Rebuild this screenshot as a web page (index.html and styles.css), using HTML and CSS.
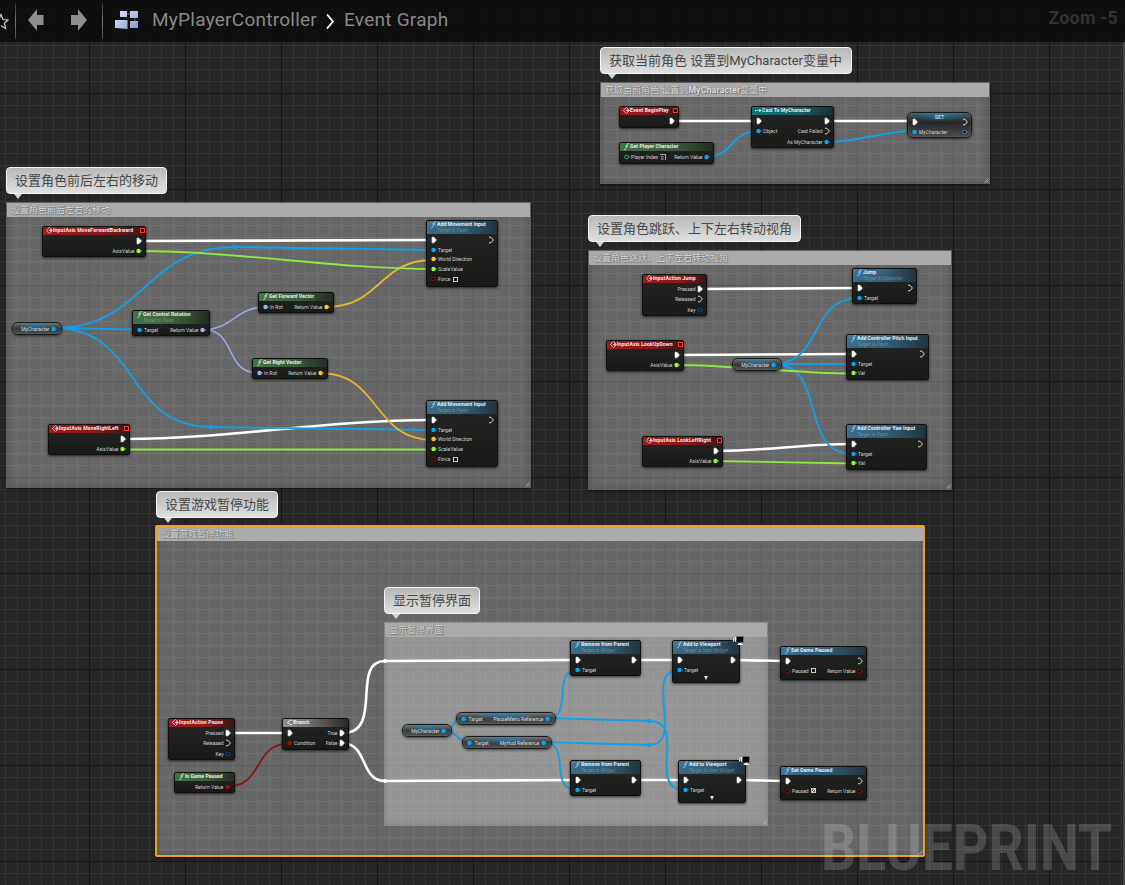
FILE: index.html
```html
<!DOCTYPE html>
<html lang="en">
<head>
<meta charset="utf-8">
<title>MyPlayerController - Event Graph</title>
<link rel="stylesheet" href="styles.css">
</head>
<body>
<svg class="defs" width="0" height="0">
  <symbol id="exec" viewBox="0 0 6 8"><path d="M1 1.2h2L5.4 4 3 6.8H1z" fill="#fff" stroke="#fff" stroke-width=".6"/></symbol>
  <symbol id="exec-open" viewBox="0 0 6 8"><path d="M1 1.2h1.9L5.4 4 2.9 6.8H1" fill="none" stroke="#eee" stroke-width=".9"/></symbol>
  <symbol id="pin" viewBox="0 0 6 8"><circle cx="2.5" cy="4" r="2.2" fill="currentColor"/><path d="M4.6 2.9 6 4 4.6 5.1z" fill="currentColor"/></symbol>
  <symbol id="pin-open" viewBox="0 0 6 8"><circle cx="2.5" cy="4" r="1.8" fill="#0c0c0c" stroke="currentColor" stroke-width=".9"/><path d="M4.7 3 6 4 4.7 5z" fill="currentColor"/></symbol>
  <symbol id="event" viewBox="0 0 6 6"><path d="M2.7.5.4 3l2.3 2.5M3.2.5 5.6 3 3.2 5.5M2.4 3h2.4M3.7 2 4.8 3 3.7 4" fill="none" stroke="#f3dede" stroke-width=".7"/></symbol>
  <symbol id="func" viewBox="0 0 6 6"><path d="M5.2.7C3.9.1 3.5 1 3.2 2.2L2.6 4.4C2.3 5.5 1.7 5.9.9 5.5M2 2.5h2.5" fill="none" stroke="currentColor" stroke-width=".85"/></symbol>
  <symbol id="cast" viewBox="0 0 6 6"><path d="M0 3h1.2M2 3h1M4 2.2 5.2 3 4 3.8z" fill="#dff" stroke="#dff" stroke-width=".8"/></symbol>
  <symbol id="branch" viewBox="0 0 6 6"><path d="M5.3 1.1H3.6L1.2 3l2.4 1.9h1.7" fill="none" stroke="#eee" stroke-width=".8"/></symbol>
  <symbol id="monitor" viewBox="0 0 11 9"><path d="M3.5.5h7v6h-7z" fill="#050505" stroke="#777" stroke-width=".5"/><path d="M5.5 7h3v1H10v1H4.5V8h1z" fill="#fff"/><path d="M0 5.5V3L1.3 1H3v5H2V4.5H1v1z" fill="#f5f5f5"/><path d="M1.4 2v1.6" stroke="#222" stroke-width=".7"/></symbol>
  <symbol id="grip" viewBox="0 0 6 6"><path d="M.5 5.5l5-5M3 5.5 5.5 3" stroke="#ccc" stroke-width=".8"/></symbol>
  <linearGradient id="tile" x1="0" y1="0" x2="1" y2="1"><stop offset="0" stop-color="#e7edff"/><stop offset="1" stop-color="#8294cf"/></linearGradient>
</svg>
<main class="graph">
  <section class="comment c-begin"><h2>获取当前角色 设置到<b>MyCharacter</b>变量中</h2><svg class="grip"><use href="#grip"/></svg></section>
  <section class="comment c-move"><h2>设置角色前后左右的移动</h2><svg class="grip"><use href="#grip"/></svg></section>
  <section class="comment c-look"><h2>设置角色跳跃、上下左右转动视角</h2><svg class="grip"><use href="#grip"/></svg></section>
  <section class="comment c-pause selected"><h2>设置游戏暂停功能</h2><svg class="grip"><use href="#grip"/></svg></section>
  <section class="comment c-ui"><h2>显示暂停界面</h2><svg class="grip"><use href="#grip"/></svg></section>

  <div class="bubble b-begin">获取当前角色 设置到MyCharacter变量中</div>
  <div class="bubble b-move">设置角色前后左右的移动</div>
  <div class="bubble b-look">设置角色跳跃、上下左右转动视角</div>
  <div class="bubble b-pause">设置游戏暂停功能</div>
  <div class="bubble b-ui">显示暂停界面</div>

  <svg class="wires" viewBox="0 0 1125 885">
    <g class="w-exec">
      <path d="M674 121H755M829 121H912"/>
      <path d="M141 241L431 240"/>
      <path d="M125 439C230 439 325 420 431 420"/>
      <path d="M701 289L857 288M678 355L851 354"/>
      <path d="M717 451C765 451 803 444 851 444"/>
      <path d="M229 733H287M343 733C384 733 350 661 385 661L575 660"/>
      <path d="M343 743.5C368 743.5 360 781 385 781L575 780"/>
      <path d="M635 660H677M734 660L785 661M635 780H683M740 780L785 781"/>
    </g>
    <g class="w-object">
      <path d="M706 157C734 157 729 131.5 757 131.5M827 142C856 142 885 131 914 131"/>
      <path d="M54 328C146 328 143 247 235 247L433 250M54 328L138 329.5"/>
      <path d="M54 328C141 328 124 427 211 427L433 430"/>
      <path d="M773 364C824 364 808 298 859 298M773 364H853M773 364C829 364 797 454 853 454"/>
      <path d="M444 730C455 730 452 718 463 718M444 730C456 730 457 742 469 742"/>
      <path d="M548 718C574 718 551 670 577 670M548 718L649 721M543 742L649 745"/>
      <path d="M543 742C573 742 547 790 577 790"/>
      <path d="M649 721C689 721 645 790 685 790M649 745C686 745 642 670 679 670"/>
    </g>
    <g class="w-rotator"><path d="M203 329.5C233 329.5 236 307 265 307M203 329.5C237 329.5 224 373 258 373"/></g>
    <g class="w-vector"><path d="M326 307C381 307 378 260 433 260M320 373C381 373 372 440 433 440"/></g>
    <g class="w-float"><path d="M138 251C236 251 335 269 433 269M123 449.5H433M675 365C734 365 794 373.5 853 373.5M715 461L853 463.5"/></g>
    <g class="w-bool"><path d="M227 786.5C264 786.5 253 743.5 289 743.5"/></g>
    <g class="k-object"><circle cx="235" cy="247" r="2.2"/><circle cx="211" cy="427" r="2.2"/><circle cx="649" cy="721" r="2.2"/><circle cx="649" cy="745" r="2.2"/></g>
    <g class="k-exec"><circle cx="385" cy="661" r="2.1"/><circle cx="385" cy="781" r="2.1"/></g>
  </svg>

  <article class="node event n-begin"><header><svg><use href="#event"/></svg><h3>Event BeginPlay</h3><i></i></header>
    <ul><li><span></span><span><svg><use href="#exec"/></svg></span></li></ul></article>
  <article class="node pure n-getplayer"><header><svg><use href="#func"/></svg><h3>Get Player Character</h3></header>
    <ul><li><span class="t-int"><svg><use href="#pin-open"/></svg>Player Index <em class="num">0</em></span><span class="t-object">Return Value<svg><use href="#pin"/></svg></span></li></ul></article>
  <article class="node cast n-cast"><header><svg><use href="#cast"/></svg><h3>Cast To MyCharacter</h3></header>
    <ul><li><span><svg><use href="#exec"/></svg></span><span><svg><use href="#exec"/></svg></span></li>
    <li><span class="t-object"><svg><use href="#pin"/></svg>Object</span><span>Cast Failed<svg><use href="#exec-open"/></svg></span></li>
    <li><span></span><span class="t-object">As MyCharacter<svg><use href="#pin"/></svg></span></li></ul></article>
  <article class="node set n-set"><header><h3>SET</h3></header>
    <ul><li><span><svg><use href="#exec"/></svg></span><span><svg><use href="#exec-open"/></svg></span></li>
    <li><span class="t-object"><svg><use href="#pin"/></svg>MyCharacter</span><span class="t-object"><svg><use href="#pin-open"/></svg></span></li></ul></article>

  <article class="node event n-fwd"><header><svg><use href="#event"/></svg><h3>InputAxis MoveForwardBackward</h3><i></i></header>
    <ul><li><span></span><span><svg><use href="#exec"/></svg></span></li><li><span></span><span class="t-float">Axis Value<svg><use href="#pin"/></svg></span></li></ul></article>
  <article class="node event n-right"><header><svg><use href="#event"/></svg><h3>InputAxis MoveRightLeft</h3><i></i></header>
    <ul><li><span></span><span><svg><use href="#exec"/></svg></span></li><li><span></span><span class="t-float">Axis Value<svg><use href="#pin"/></svg></span></li></ul></article>
  <article class="node func n-add1"><header><svg><use href="#func"/></svg><h3>Add Movement Input</h3><p>Target is Pawn</p></header>
    <ul><li><span><svg><use href="#exec"/></svg></span><span><svg><use href="#exec-open"/></svg></span></li>
    <li><span class="t-object"><svg><use href="#pin"/></svg>Target</span></li><li><span class="t-vector"><svg><use href="#pin"/></svg>World Direction</span></li>
    <li><span class="t-float"><svg><use href="#pin"/></svg>Scale Value</span></li><li><span class="t-bool"><svg><use href="#pin-open"/></svg>Force <em class="box"></em></span></li></ul></article>
  <article class="node func n-add2"><header><svg><use href="#func"/></svg><h3>Add Movement Input</h3><p>Target is Pawn</p></header>
    <ul><li><span><svg><use href="#exec"/></svg></span><span><svg><use href="#exec-open"/></svg></span></li>
    <li><span class="t-object"><svg><use href="#pin"/></svg>Target</span></li><li><span class="t-vector"><svg><use href="#pin"/></svg>World Direction</span></li>
    <li><span class="t-float"><svg><use href="#pin"/></svg>Scale Value</span></li><li><span class="t-bool"><svg><use href="#pin-open"/></svg>Force <em class="box"></em></span></li></ul></article>
  <article class="node pure n-rot"><header><svg><use href="#func"/></svg><h3>Get Control Rotation</h3><p>Target is Pawn</p></header>
    <ul><li><span class="t-object"><svg><use href="#pin"/></svg>Target</span><span class="t-rotator">Return Value<svg><use href="#pin"/></svg></span></li></ul></article>
  <article class="node pure n-fvec"><header><svg><use href="#func"/></svg><h3>Get Forward Vector</h3></header>
    <ul><li><span class="t-rotator"><svg><use href="#pin"/></svg>In Rot</span><span class="t-vector">Return Value<svg><use href="#pin"/></svg></span></li></ul></article>
  <article class="node pure n-rvec"><header><svg><use href="#func"/></svg><h3>Get Right Vector</h3></header>
    <ul><li><span class="t-rotator"><svg><use href="#pin"/></svg>In Rot</span><span class="t-vector">Return Value<svg><use href="#pin"/></svg></span></li></ul></article>
  <div class="var v-char1"><span class="t-object">MyCharacter<svg><use href="#pin"/></svg></span></div>

  <article class="node event n-jumpkey"><header><svg><use href="#event"/></svg><h3>InputAction Jump</h3></header>
    <ul><li><span></span><span>Pressed<svg><use href="#exec"/></svg></span></li><li><span></span><span>Released<svg><use href="#exec-open"/></svg></span></li><li><span></span><span class="t-key">Key<svg><use href="#pin-open"/></svg></span></li></ul></article>
  <article class="node func n-jump"><header><svg><use href="#func"/></svg><h3>Jump</h3><p>Target is Character</p></header>
    <ul><li><span><svg><use href="#exec"/></svg></span><span><svg><use href="#exec-open"/></svg></span></li><li><span class="t-object"><svg><use href="#pin"/></svg>Target</span></li></ul></article>
  <article class="node event n-lookud"><header><svg><use href="#event"/></svg><h3>InputAxis LookUpDown</h3><i></i></header>
    <ul><li><span></span><span><svg><use href="#exec"/></svg></span></li><li><span></span><span class="t-float">Axis Value<svg><use href="#pin"/></svg></span></li></ul></article>
  <article class="node func n-pitch"><header><svg><use href="#func"/></svg><h3>Add Controller Pitch Input</h3><p>Target is Pawn</p></header>
    <ul><li><span><svg><use href="#exec"/></svg></span><span><svg><use href="#exec-open"/></svg></span></li><li><span class="t-object"><svg><use href="#pin"/></svg>Target</span></li><li><span class="t-float"><svg><use href="#pin"/></svg>Val</span></li></ul></article>
  <article class="node event n-looklr"><header><svg><use href="#event"/></svg><h3>InputAxis LookLeftRight</h3><i></i></header>
    <ul><li><span></span><span><svg><use href="#exec"/></svg></span></li><li><span></span><span class="t-float">Axis Value<svg><use href="#pin"/></svg></span></li></ul></article>
  <article class="node func n-yaw"><header><svg><use href="#func"/></svg><h3>Add Controller Yaw Input</h3><p>Target is Pawn</p></header>
    <ul><li><span><svg><use href="#exec"/></svg></span><span><svg><use href="#exec-open"/></svg></span></li><li><span class="t-object"><svg><use href="#pin"/></svg>Target</span></li><li><span class="t-float"><svg><use href="#pin"/></svg>Val</span></li></ul></article>
  <div class="var v-char2"><span class="t-object">MyCharacter<svg><use href="#pin"/></svg></span></div>

  <article class="node event n-pausekey"><header><svg><use href="#event"/></svg><h3>InputAction Pause</h3></header>
    <ul><li><span></span><span>Pressed<svg><use href="#exec"/></svg></span></li><li><span></span><span>Released<svg><use href="#exec-open"/></svg></span></li><li><span></span><span class="t-key">Key<svg><use href="#pin-open"/></svg></span></li></ul></article>
  <article class="node flow n-branch"><header><svg><use href="#branch"/></svg><h3>Branch</h3></header>
    <ul><li><span><svg><use href="#exec"/></svg></span><span>True<svg><use href="#exec"/></svg></span></li><li><span class="t-bool"><svg><use href="#pin"/></svg>Condition</span><span>False<svg><use href="#exec"/></svg></span></li></ul></article>
  <article class="node pure n-ispaused"><header><svg><use href="#func"/></svg><h3>Is Game Paused</h3></header>
    <ul><li><span></span><span class="t-bool">Return Value<svg><use href="#pin"/></svg></span></li></ul></article>
  <div class="var v-char3"><span class="t-object">MyCharacter<svg><use href="#pin"/></svg></span></div>
  <div class="var v-menu"><span class="t-object"><svg><use href="#pin"/></svg>Target</span><span class="t-object">PauseMenu Reference<svg><use href="#pin"/></svg></span></div>
  <div class="var v-hud"><span class="t-object"><svg><use href="#pin"/></svg>Target</span><span class="t-object">MyHud Reference<svg><use href="#pin"/></svg></span></div>
  <article class="node func n-rem1"><header><svg><use href="#func"/></svg><h3>Remove from Parent</h3><p>Target is Widget</p></header>
    <ul><li><span><svg><use href="#exec"/></svg></span><span><svg><use href="#exec"/></svg></span></li><li><span class="t-object"><svg><use href="#pin"/></svg>Target</span></li></ul></article>
  <article class="node func n-rem2"><header><svg><use href="#func"/></svg><h3>Remove from Parent</h3><p>Target is Widget</p></header>
    <ul><li><span><svg><use href="#exec"/></svg></span><span><svg><use href="#exec"/></svg></span></li><li><span class="t-object"><svg><use href="#pin"/></svg>Target</span></li></ul></article>
  <article class="node func n-view1"><header><svg><use href="#func"/></svg><h3>Add to Viewport</h3><p>Target is User Widget</p></header>
    <ul><li><span><svg><use href="#exec"/></svg></span><span><svg><use href="#exec"/></svg></span></li><li><span class="t-object"><svg><use href="#pin"/></svg>Target</span></li></ul><div class="more"></div><svg class="monitor"><use href="#monitor"/></svg></article>
  <article class="node func n-view2"><header><svg><use href="#func"/></svg><h3>Add to Viewport</h3><p>Target is User Widget</p></header>
    <ul><li><span><svg><use href="#exec"/></svg></span><span><svg><use href="#exec"/></svg></span></li><li><span class="t-object"><svg><use href="#pin"/></svg>Target</span></li></ul><div class="more"></div><svg class="monitor"><use href="#monitor"/></svg></article>
  <article class="node func n-set1"><header><svg><use href="#func"/></svg><h3>Set Game Paused</h3></header>
    <ul><li><span><svg><use href="#exec"/></svg></span><span><svg><use href="#exec-open"/></svg></span></li><li><span class="t-bool"><svg><use href="#pin-open"/></svg>Paused <em class="box"></em></span><span class="t-bool">Return Value<svg><use href="#pin-open"/></svg></span></li></ul></article>
  <article class="node func n-set2"><header><svg><use href="#func"/></svg><h3>Set Game Paused</h3></header>
    <ul><li><span><svg><use href="#exec"/></svg></span><span><svg><use href="#exec-open"/></svg></span></li><li><span class="t-bool"><svg><use href="#pin-open"/></svg>Paused <em class="box checked"></em></span><span class="t-bool">Return Value<svg><use href="#pin-open"/></svg></span></li></ul></article>

  <div class="watermark">BLUEPRINT</div>
  <nav class="topbar">
    <svg class="star" width="9" height="20" viewBox="0 0 9 20"><path d="M-6 8H-1.5L1 2.5 3 7.5 8 8 4.4 11.3 5.7 16.5 1 13.8" fill="none" stroke="#ccc" stroke-width="1.2"/></svg>
    <span class="rule"></span>
    <svg class="arrow" width="18" height="24" viewBox="0 0 18 24"><path d="M0 12 9 1v6h6.5v10H9v6z" fill="#8e8e8e"/></svg>
    <svg class="arrow next" width="18" height="24" viewBox="0 0 18 24"><path d="M17 12 8 1v6H1v10h7v6z" fill="#8e8e8e"/></svg>
    <span class="rule second"></span>
    <svg class="logo" width="24" height="20" viewBox="0 0 24 20"><path d="M12 4h7M10 12v-2M20 7v4" stroke="#53669c"/><g fill="url(#tile)"><path d="M5 1h7v6H5zM15 1h8v7h-8zM-.5 10h13v9L-.5 18zM15 11h8v7h-8z"/></g></svg>
    <span class="crumb first">MyPlayerController</span>
    <svg class="chev" width="9" height="16" viewBox="0 0 9 16"><path d="M1 1.5l6 7-6 7" fill="none" stroke="#fff" stroke-width="1.8"/></svg>
    <span class="crumb">Event Graph</span>
    <span class="zoom">Zoom -5</span>
  </nav>
  <div class="edge"></div>
</main>
</body>
</html>
```
FILE: styles.css
```css
* { box-sizing: border-box; }
body { margin: 0; background: #262626; }
.defs { position: absolute; }
h2, h3, p, ul { margin: 0; padding: 0; }
ul { list-style: none; }

.graph {
  position: relative;
  width: 1125px;
  height: 885px;
  overflow: hidden;
  font-family: Roboto, "Noto Sans CJK SC", sans-serif;
  background-color: #262626;
  background-image:
    linear-gradient(90deg, #161616 1px, transparent 1px),
    linear-gradient(#161616 1px, transparent 1px),
    linear-gradient(90deg, #353535 1px, transparent 1px),
    linear-gradient(#353535 1px, transparent 1px);
  background-size: 96px 96px, 96px 96px, 12px 12px, 12px 12px;
  background-position: 89px 0, 0 93px, 5px 0, 0 9px;
}

/* top bar */
.topbar {
  position: absolute;
  inset: 0 0 auto 0;
  height: 42px;
  display: flex;
  align-items: center;
  background: rgba(10, 10, 10, .82);
}
.topbar svg { flex: none; }
.star { margin-top: 2px; }
.rule { width: 1px; height: 36px; margin-left: 6px; background: linear-gradient(#333, #777 50%, #444); }
.arrow { margin-left: 12px; margin-bottom: 2px; }
.next { margin-left: 24px; }
.second { margin-left: 14px; }
.logo { margin-left: 12px; margin-bottom: 2px; }
.crumb { font-size: 19px; letter-spacing: .25px; line-height: 24px; color: #898989; white-space: nowrap; margin-bottom: 2px; }
.first { margin-left: 13px; }
.chev { margin: 0 9px 0 9px; }
.zoom { margin-left: auto; margin-right: 7px; margin-bottom: 7px; font-size: 18px; letter-spacing: .15px; font-weight: 700; color: #333; }
.edge { position: absolute; top: 42px; right: 0; bottom: 0; width: 2px; background: #484848; }

.watermark {
  position: absolute;
  left: 821px;
  top: 810px;
  font-size: 65px;
  line-height: 76px;
  font-weight: 700;
  color: rgba(255, 255, 255, .17);
  transform: scaleX(.85);
  transform-origin: 0 0;
}

/* comment boxes */
.comment {
  position: absolute;
  background: rgba(255, 255, 255, .3);
  border: 1px solid rgba(90, 90, 90, .6);
  box-shadow: inset 0 0 8px rgba(0, 0, 0, .22), 0 1px 3px rgba(0, 0, 0, .6);
}
.comment h2 {
  height: 14px;
  padding-left: 4px;
  background: #ababab;
  font-size: 9px;
  line-height: 14px;
  font-weight: 400;
  color: #dedede;
  text-shadow: 0 0 1px #555, 1px 1px 1px #777;
  white-space: nowrap;
}
.grip { position: absolute; right: 0; bottom: 0; width: 5px; height: 5px; }
.selected { border: 2px solid #f0a01c; border-radius: 2px; }
.c-begin { left: 600px; top: 82px; width: 390px; height: 102px; }
.c-move { left: 6px; top: 202px; width: 525px; height: 286px; }
.c-look { left: 588px; top: 250px; width: 364px; height: 240px; }
.c-pause { left: 155px; top: 525px; width: 770px; height: 332px; }
.c-ui { left: 384px; top: 622px; width: 384px; height: 204px; border-color: rgba(130, 130, 130, .6); box-shadow: inset 0 0 6px rgba(0, 0, 0, .12); }

.bubble {
  position: absolute;
  height: 27px;
  padding-left: 8px;
  border: 1px solid #f4f4f4;
  border-radius: 4px;
  background: linear-gradient(#b8b8b8, #e0e0e0);
  font-size: 13px;
  line-height: 26px;
  color: #484848;
  white-space: nowrap;
}
.bubble::after {
  content: "";
  position: absolute;
  left: 7px;
  top: 26px;
  border: 4px solid transparent;
  border-top: 5px solid #d5d5d5;
  border-bottom: 0;
}
.b-begin { left: 600px; top: 47px; width: 252px; }
.b-move { left: 6px; top: 167px; width: 161px; }
.b-look { left: 588px; top: 215px; width: 213px; }
.b-pause { left: 156px; top: 491px; width: 122px; }
.b-ui { left: 384px; top: 587px; width: 96px; }

/* wires */
.wires { position: absolute; inset: 0; width: 1125px; height: 885px; fill: none; }
.w-exec { stroke: #fff; stroke-width: 2.6; }
.w-object { stroke: #159fe2; stroke-width: 1.9; }
.w-rotator { stroke: #99a7e8; stroke-width: 1.7; }
.w-vector { stroke: #e6b52c; stroke-width: 1.8; }
.w-float { stroke: #8fe843; stroke-width: 1.8; }
.w-bool { stroke: #8c1414; stroke-width: 1.8; }
.k-object { fill: #0aa2ee; }
.k-exec { fill: #fff; }

/* nodes */
.node {
  position: absolute;
  border: 1px solid #101010;
  border-radius: 2px;
  background: linear-gradient(rgba(32, 33, 32, .95), rgba(22, 24, 22, .97));
  box-shadow: 0 1px 3px rgba(0, 0, 0, .7);
  color: #d2d2d2;
  font-size: 5px;
}
.node header {
  position: relative;
  height: 8px;
  padding-left: 10px;
  border-radius: 1px 1px 0 0;
  white-space: nowrap;
}
.node header > svg { position: absolute; left: 3px; top: 0; width: 7px; height: 7px; }
.node h3 { font-size: 5.1px; line-height: 7px; font-weight: 700; color: #eee; letter-spacing: .05px; }
.event h3 { letter-spacing: .12px; }
.node header i { position: absolute; right: 0; top: 1px; width: 5px; height: 5px; border: 1px solid #f43a3a; background: #200; }
.node p { font-size: 4.9px; line-height: 5px; font-style: italic; color: #d8e0c0; opacity: .34; }
.func header, .n-rot header { height: 13px; }
.n-set1 header, .n-set2 header { height: 8px; }
.node ul { padding-top: 1px; }
.node li { display: flex; justify-content: space-between; height: 10.3px; padding: 0 3px 0 3.5px; }
.func li { height: 9.8px; }
.node li span, .var span { display: flex; align-items: center; gap: 1.5px; white-space: nowrap; }
.node li svg, .var svg { width: 6px; height: 8px; flex: none; }
.node li span svg:last-child { margin-left: -.6px; }
.node li span svg:first-child { margin-left: 0; }
.t-float { word-spacing: -.9px; }
.event header { background: linear-gradient(90deg, #a3181d, #8a171a 60%, #3a1616); }
.func header { background: linear-gradient(170deg, rgba(255, 255, 255, .1), transparent 50%), linear-gradient(90deg, #35698a, #2f5a74 55%, #22333c); color: #7cd0ff; }
.pure header { background: linear-gradient(90deg, #46714a, #3c5e3c 55%, #232c23); color: #9dff9d; }
.cast header { background: linear-gradient(90deg, #127276, #155c66 60%, #1c2c30); }
.flow header { background: linear-gradient(90deg, #8b8b8b, #707070 40%, #282828); }
.t-object svg { color: #08a4f2; }
.t-float svg { color: #96f540; }
.t-vector svg { color: #ffc524; }
.t-rotator svg { color: #9dafff; }
.t-bool svg { color: #970f0f; }
.t-int svg { color: #1ecfa2; }
.t-key svg { color: #0b58b5; }
.box { width: 5px; height: 5px; border: 1px solid #ccc; margin-left: 1px; }
.checked { background: linear-gradient(135deg, transparent 35%, #fff 35% 65%, transparent 65%) #666; }
.num { width: 6px; height: 6px; border: solid #aaa; border-width: 1px 1px 0 0; font-style: normal; font-size: 5px; line-height: 6px; text-align: center; }
.more { position: absolute; left: 50%; bottom: 2px; margin-left: -2px; border: 2.5px solid transparent; border-top: 4px solid #ddd; border-bottom: 0; }
.monitor { position: absolute; right: -5px; top: -5px; width: 11px; height: 9px; }

.set, .var {
  border: 1px solid #181818;
  border-radius: 6px;
  background: radial-gradient(ellipse at 50% 0, rgba(35, 125, 175, .9), transparent 55%), linear-gradient(rgba(105, 110, 113, .9), rgba(50, 52, 53, .92) 50%, rgba(72, 74, 75, .92));
  box-shadow: inset 0 0 1px #bbb, 0 1px 3px rgba(0, 0, 0, .6);
}
.set { background: radial-gradient(ellipse 60% 35% at 50% 0, rgba(35, 125, 175, .9), transparent), linear-gradient(#4a4d4f, #252728 40%, #4a4c4d); }
.set header { height: 3px; padding: 0; text-align: center; }
.set h3 { line-height: 8px; color: #b9dcec; }
.var { position: absolute; height: 13px; display: flex; justify-content: space-between; padding: 0 4px; color: #ddd; font-size: 5px; }
.var > span:only-child { margin-left: auto; }

.n-begin { left: 619px; top: 106px; width: 60px; height: 22px; }
.n-getplayer { left: 619px; top: 142px; width: 95px; height: 22px; }
.n-cast { left: 751px; top: 106px; width: 83px; height: 42px; }
.n-set { left: 907px; top: 112px; width: 65px; height: 26px; }
.n-fwd { left: 42px; top: 226px; width: 104px; height: 31px; }
.n-right { left: 48px; top: 424px; width: 82px; height: 31px; }
.n-add1 { left: 426px; top: 220px; width: 72px; height: 67px; }
.n-add2 { left: 426px; top: 400px; width: 72px; height: 67px; }
.n-rot { left: 132px; top: 310px; width: 78px; height: 26px; }
.n-fvec { left: 258px; top: 292px; width: 76px; height: 21px; }
.n-rvec { left: 252px; top: 358px; width: 76px; height: 21px; }
.n-jumpkey { left: 642px; top: 274px; width: 65px; height: 42px; }
.n-jump { left: 852px; top: 268px; width: 65px; height: 36px; }
.n-lookud { left: 606px; top: 340px; width: 78px; height: 31px; }
.n-pitch { left: 846px; top: 334px; width: 83px; height: 46px; }
.n-looklr { left: 642px; top: 436px; width: 81px; height: 31px; }
.n-yaw { left: 846px; top: 424px; width: 81px; height: 46px; }
.n-pausekey { left: 168px; top: 718px; width: 67px; height: 42px; }
.n-branch { left: 282px; top: 718px; width: 67px; height: 32px; }
.n-ispaused { left: 174px; top: 772px; width: 61px; height: 21px; }
.n-rem1 { left: 570px; top: 640px; width: 71px; height: 36px; }
.n-rem2 { left: 570px; top: 760px; width: 71px; height: 36px; }
.n-view1 { left: 672px; top: 640px; width: 68px; height: 43px; }
.n-view2 { left: 678px; top: 760px; width: 68px; height: 43px; }
.n-set1 { left: 780px; top: 646px; width: 87px; height: 34px; }
.n-set2 { left: 780px; top: 766px; width: 87px; height: 34px; }
.v-char1 { left: 12px; top: 322px; width: 50px; }
.v-char2 { left: 732px; top: 358px; width: 50px; }
.v-char3 { left: 402px; top: 724px; width: 50px; }
.v-menu { left: 456px; top: 712px; width: 100px; }
.v-hud { left: 462px; top: 736px; width: 90px; }
```
